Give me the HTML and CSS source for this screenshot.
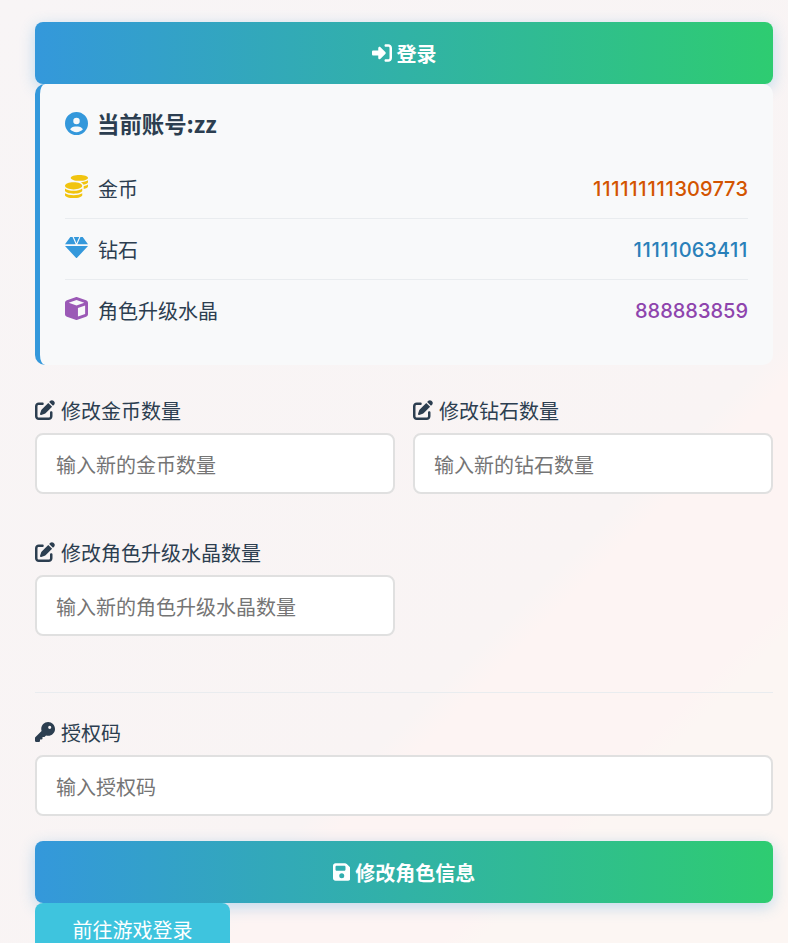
FILE: index.html
```html
<!DOCTYPE html>
<html lang="zh-CN">
<head>
<meta charset="utf-8">
<title>修改角色信息</title>
<link rel="stylesheet" href="styles.css">
</head>
<body>
<svg class="defs" aria-hidden="true">
  <symbol id="i-login" viewBox="0 0 512 512"><path d="M217.9 105.9L340.7 228.7c7.2 7.2 11.3 17.1 11.3 27.3s-4.1 20.1-11.3 27.3L217.9 406.1c-6.4 6.4-15 9.9-24 9.9c-18.7 0-33.9-15.2-33.9-33.9l0-62.1L32 320c-17.7 0-32-14.3-32-32l0-64c0-17.7 14.3-32 32-32l128 0 0-62.1c0-18.7 15.2-33.9 33.9-33.9c9 0 17.6 3.6 24 9.9zM352 416l64 0c17.7 0 32-14.3 32-32l0-256c0-17.7-14.3-32-32-32l-64 0c-17.7 0-32-14.3-32-32s14.3-32 32-32l64 0c53 0 96 43 96 96l0 256c0 53-43 96-96 96l-64 0c-17.7 0-32-14.3-32-32s14.3-32 32-32z"/></symbol>
  <symbol id="i-user" viewBox="0 0 512 512"><path d="M399 384.2C376.9 345.8 335.4 320 288 320H224c-47.4 0-88.9 25.8-111 64.2c35.2 39.2 86.2 63.8 143 63.8s107.8-24.7 143-63.8zM0 256a256 256 0 1 1 512 0A256 256 0 1 1 0 256zm256 16a72 72 0 1 0 0-144 72 72 0 1 0 0 144z"/></symbol>
  <symbol id="i-coins" viewBox="0 0 512 512"><path d="M0 405.3V448c0 35.3 86 64 192 64s192-28.7 192-64v-42.7C342.7 434.4 267.2 448 192 448S41.3 434.4 0 405.3zM320 128c106 0 192-28.7 192-64S426 0 320 0 128 28.7 128 64s86 64 192 64zM0 300.4V352c0 35.3 86 64 192 64s192-28.7 192-64v-51.6c-41.3 34-116.9 51.6-192 51.6S41.3 334.4 0 300.4zm416 11c57.3-11.1 96-31.7 96-55.4v-42.7c-23.2 16.4-57.3 27.6-96 34.5v63.6zM192 160C86 160 0 195.8 0 240s86 80 192 80 192-35.8 192-80-86-80-192-80zm219.3 56.3c60-10.8 100.7-32 100.7-56.3v-42.7c-35.5 25.1-96.5 38.6-160.7 41.8 29.5 14.3 51.2 33.5 60 57.2z"/></symbol>
  <symbol id="i-gem" viewBox="0 0 512 512"><path d="M118 24H168L238 184H0Z M196 24H316L256 160Z M344 24H394L512 184H274Z M0 222H512L268 486C261 494 251 494 244 486Z"/></symbol>
  <symbol id="i-cube" viewBox="0 0 512 512"><path d="M234.5 5.7c13.9-5 29.1-5 43.1 0l192 68.6C495 83.4 512 107.5 512 134.6V377.4c0 27-17 51.2-42.5 60.3l-192 68.6c-13.9 5-29.1 5-43.1 0l-192-68.6C17 428.6 0 404.5 0 377.4V134.6c0-27 17-51.2 42.5-60.3l192-68.6zM256 66L82.3 128 256 190l173.7-62L256 66zm32 368.6l160-57.1v-188L288 246.6v188z"/></symbol>
  <symbol id="i-edit" viewBox="0 0 512 512"><path d="M471.6 21.7c-21.9-21.9-57.3-21.9-79.2 0L362.3 51.7l97.9 97.9 30.1-30.1c21.9-21.9 21.9-57.3 0-79.2L471.6 21.7zm-299.2 220c-6.1 6.1-10.8 13.6-13.5 21.9l-29.6 88.8c-2.9 8.6-.6 18.1 5.8 24.6s15.9 8.7 24.6 5.8l88.8-29.6c8.2-2.7 15.7-7.4 21.9-13.5L437.7 172.3 339.7 74.3 172.4 241.7zM96 64C43 64 0 107 0 160V416c0 53 43 96 96 96H352c53 0 96-43 96-96V320c0-17.7-14.3-32-32-32s-32 14.3-32 32v96c0 17.7-14.3 32-32 32H96c-17.7 0-32-14.3-32-32V160c0-17.7 14.3-32 32-32h96c17.7 0 32-14.3 32-32s-14.3-32-32-32H96z"/></symbol>
  <symbol id="i-key" viewBox="0 0 512 512"><path d="M336 352c97.2 0 176-78.8 176-176S433.2 0 336 0S160 78.8 160 176c0 18.7 2.9 36.8 8.3 53.7L7 391c-4.5 4.5-7 10.6-7 17v80c0 13.3 10.7 24 24 24h80c13.3 0 24-10.7 24-24V448h40c13.3 0 24-10.7 24-24V384h40c6.4 0 12.5-2.5 17-7l33.3-33.3c16.9 5.4 35 8.3 53.7 8.3zM376 96a40 40 0 1 1 0 80 40 40 0 1 1 0-80z"/></symbol>
  <symbol id="i-save" viewBox="0 0 448 512"><path d="M64 32C28.7 32 0 60.7 0 96V416c0 35.3 28.7 64 64 64H384c35.3 0 64-28.7 64-64V173.3c0-17-6.7-33.3-18.7-45.3L352 50.7C340 38.7 323.7 32 306.7 32H64zm0 96c0-17.7 14.3-32 32-32H288c17.7 0 32 14.3 32 32v64c0 17.7-14.3 32-32 32H96c-17.7 0-32-14.3-32-32V128zM224 288a64 64 0 1 1 0 128 64 64 0 1 1 0-128z"/></symbol>
</svg>
<main class="page">
  <button class="btn" type="button"><svg class="ico ico-btn"><use href="#i-login"/></svg>登录</button>

  <section class="account">
    <h3 class="account-title"><svg class="ico ico-lg c-blue"><use href="#i-user"/></svg>当前账号:zz</h3>
    <div class="stat">
      <span class="stat-label"><svg class="ico ico-lg c-gold"><use href="#i-coins"/></svg>金币</span>
      <span class="stat-value v-gold"><span class="ones">111111111</span>309773</span>
    </div>
    <div class="stat">
      <span class="stat-label"><svg class="ico ico-lg c-blue"><use href="#i-gem"/></svg>钻石</span>
      <span class="stat-value v-blue"><span class="ones">11111</span>0634<span class="ones">11</span></span>
    </div>
    <div class="stat stat-last">
      <span class="stat-label"><svg class="ico ico-lg c-purple"><use href="#i-cube"/></svg>角色升级水晶</span>
      <span class="stat-value v-purple">888883859</span>
    </div>
  </section>

  <form class="fields">
    <div class="field">
      <label class="label"><svg class="ico ico-md"><use href="#i-edit"/></svg>修改金币数量</label>
      <input class="input" type="text" placeholder="输入新的金币数量">
    </div>
    <div class="field">
      <label class="label"><svg class="ico ico-md"><use href="#i-edit"/></svg>修改钻石数量</label>
      <input class="input" type="text" placeholder="输入新的钻石数量">
    </div>
    <div class="field">
      <label class="label"><svg class="ico ico-md"><use href="#i-edit"/></svg>修改角色升级水晶数量</label>
      <input class="input" type="text" placeholder="输入新的角色升级水晶数量">
    </div>
  </form>

  <hr class="divider">

  <div class="field">
    <label class="label"><svg class="ico ico-md"><use href="#i-key"/></svg>授权码</label>
    <input class="input" type="text" placeholder="输入授权码">
  </div>

  <button class="btn btn-save" type="button"><svg class="ico ico-save"><use href="#i-save"/></svg>修改角色信息</button>
  <a class="link" href="#">前往游戏登录</a>
</main>
</body>
</html>
```

FILE: styles.css
```css
* { box-sizing: border-box; }

html, body {
  margin: 0;
  height: 943px;
  overflow: hidden;
}

body {
  background: linear-gradient(135deg, #f8f5f6 0%, #f9f4f4 65%, #fdf4f3 67.5%, #fdf4f3 80%, #fcf6f3 82%, #fcf6f3 100%);
  color: #2c3e50;
  font-family: Inter, "Noto Sans CJK SC", sans-serif;
  font-size: 20px;
}

.defs { display: none; }

.page {
  display: flex;
  flex-direction: column;
  align-items: stretch;
  padding: 22px 15px 0 35px;
}

.ico { display: block; flex: none; fill: currentColor; }
.ico-lg { width: 23px; height: 23px; }
.ico-md { width: 20px; height: 20px; }
.ico-btn { width: 20px; height: 20px; }
.ico-save { width: 17.5px; height: 20px; }
.c-blue { color: #3498db; }
.c-gold { color: #f1c40f; }
.c-purple { color: #9b59b6; }

.btn {
  display: flex;
  align-items: center;
  justify-content: center;
  gap: 5px;
  width: 100%;
  height: 62px;
  padding: 0;
  border: 0;
  border-radius: 8px;
  background: linear-gradient(90deg, #3498db, #2ecc71);
  box-shadow: 0 4px 15px rgba(52, 152, 219, 0.3);
  color: #fff;
  font: 700 20px "Noto Sans CJK SC", sans-serif;
}

.btn-save { margin-top: 25px; }

.account {
  position: relative;
  padding: 23px 25px 25px;
  border-left: 5px solid #3498db;
  border-radius: 10px;
  background: #f8f9fa;
}

.account-title {
  display: flex;
  align-items: center;
  gap: 9px;
  height: 33px;
  margin: 0 0 18px;
  font: 700 22.4px/33px "Noto Sans CJK SC", sans-serif;
}

.stat {
  display: flex;
  align-items: center;
  justify-content: space-between;
  height: 61px;
  border-bottom: 1px solid #e9ecef;
}

.stat-last { height: 60px; border-bottom: 0; }

.stat-label {
  display: flex;
  align-items: center;
  gap: 10px;
  font-family: "Noto Sans CJK SC", sans-serif;
}

.stat-label .ico { margin-bottom: 3px; }

.stat-value {
  padding-top: 2px;
  font-weight: 500;
  font-kerning: none;
}
.ones { letter-spacing: 0.75px; }
.v-gold { color: #d35400; }
.v-blue { color: #2980b9; }
.v-purple { color: #8e44ad; }

.fields {
  display: grid;
  grid-template-columns: 360px 360px;
  column-gap: 18px;
  row-gap: 45px;
  margin-top: 32px;
}

.field { display: flex; flex-direction: column; }

.label {
  display: flex;
  align-items: center;
  gap: 6px;
  height: 26px;
  margin-bottom: 10px;
  font-family: "Noto Sans CJK SC", sans-serif;
}

.input {
  width: 100%;
  height: 61px;
  padding: 2px 19px 0;
  border: 2px solid #e0e0e0;
  border-radius: 8px;
  background: #fff;
  color: #2c3e50;
  font: 400 20px "Noto Sans CJK SC", sans-serif;
}

.input::placeholder { color: #757575; opacity: 1; }

.divider {
  width: 100%;
  height: 1px;
  margin: 56px 0 26px;
  border: 0;
  background: #e9ecef;
}

.link {
  display: block;
  align-self: flex-start;
  width: 195px;
  height: 40px;
  padding-top: 14px;
  border-radius: 8px 8px 0 0;
  background: #3ec4de;
  color: #fff;
  font-family: "Noto Sans CJK SC", sans-serif;
  line-height: 26px;
  text-align: center;
  text-decoration: none;
}
```
